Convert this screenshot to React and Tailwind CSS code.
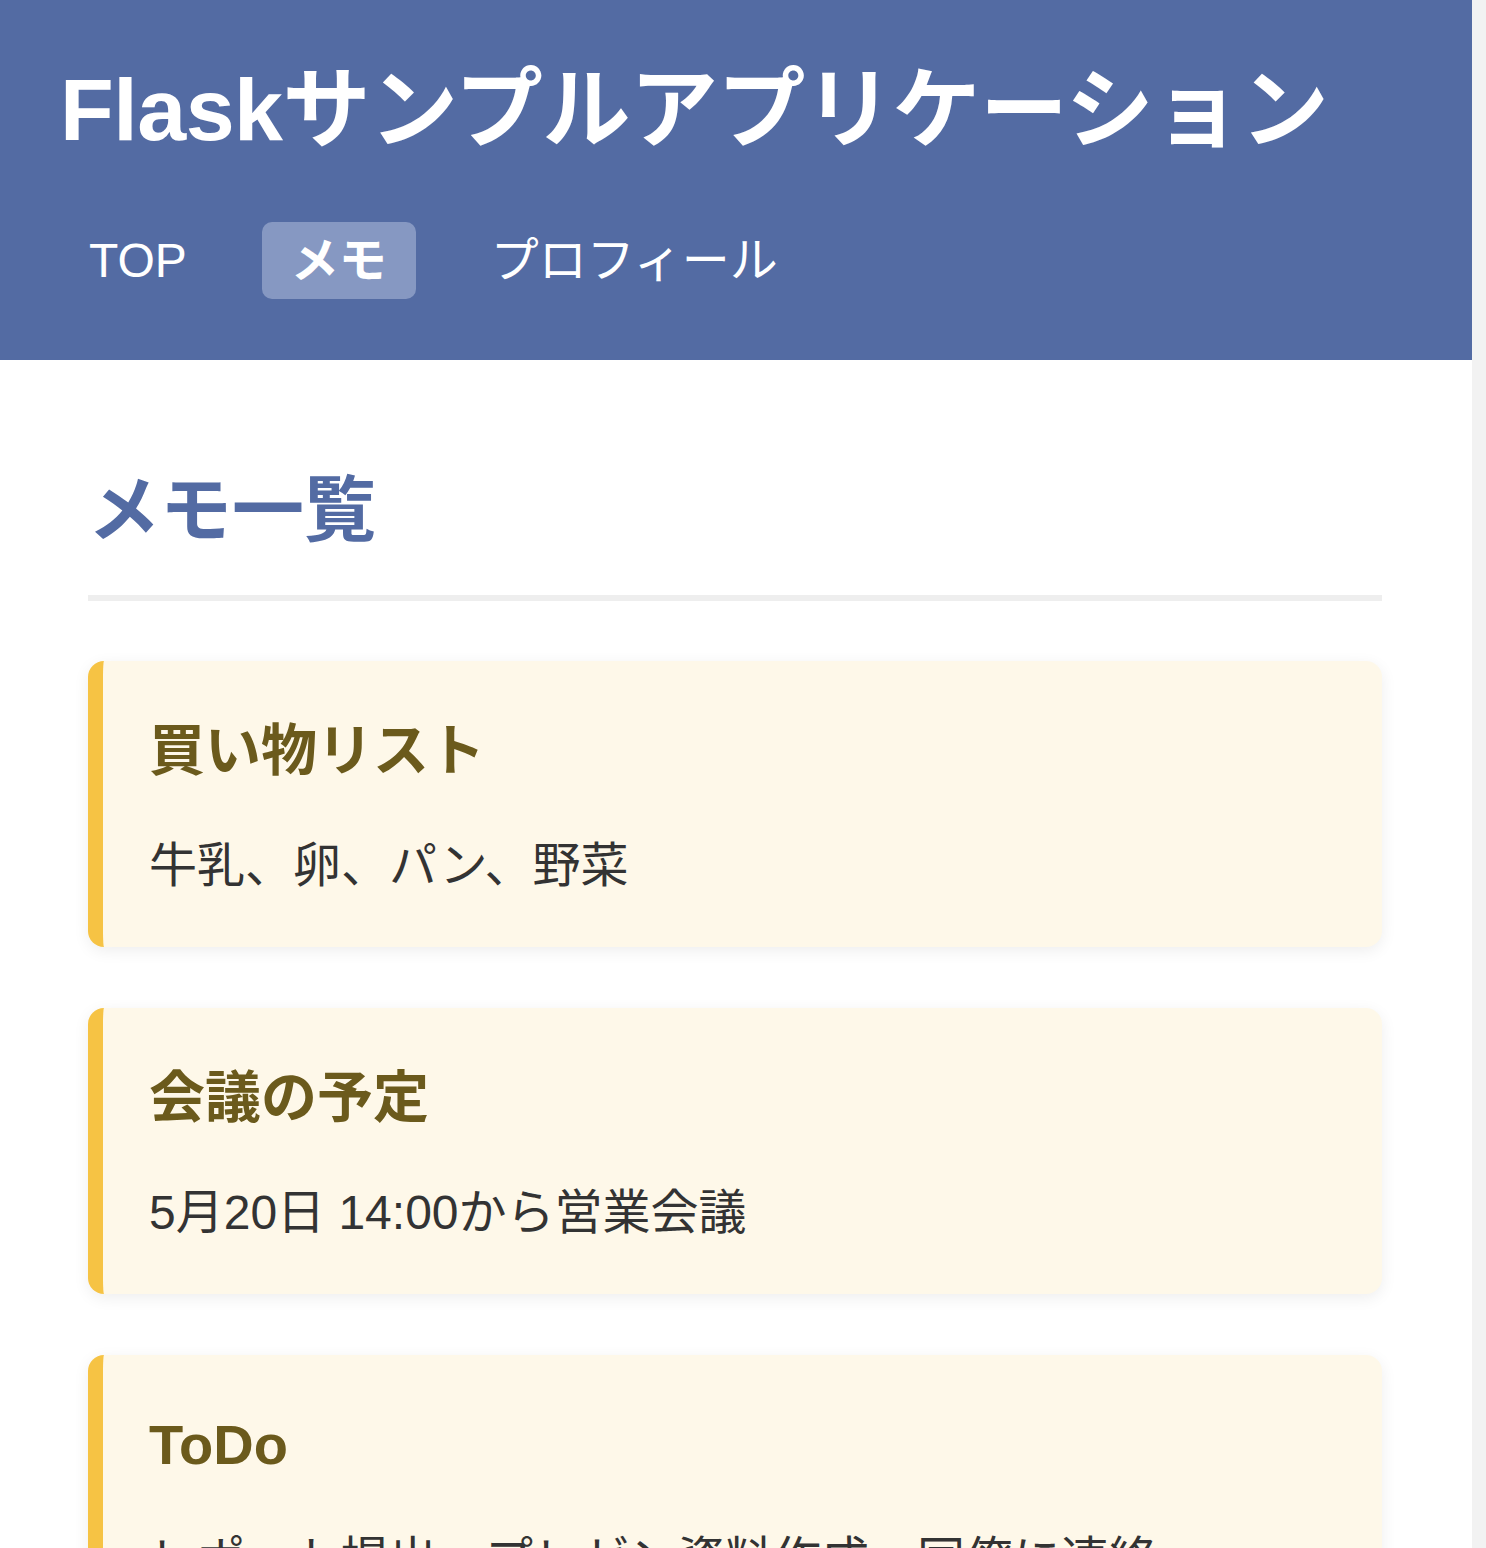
const memos = [
  { title: "買い物リスト", body: "牛乳、卵、パン、野菜" },
  { title: "会議の予定", body: "5月20日 14:00から営業会議" },
  { title: "ToDo", body: "レポート提出、プレゼン資料作成、同僚に連絡" },
];

const navItems = [
  { label: "TOP", active: false },
  { label: "メモ", active: true },
  { label: "プロフィール", active: false },
];

const font = "font-['Liberation_Sans','Noto_Sans_CJK_JP',sans-serif]";

const App = () => {
  return (
    <div className={`flex min-h-screen ${font}`}>
      <div className="flex-1 bg-white">
        <header className="bg-[#536ba3] px-[60px] pt-[57px] pb-[61px]">
          <h1 className="text-[88px] leading-[106px] font-bold text-white tracking-[-0.5px]">
            Flaskサンプルアプリケーション
          </h1>

          <nav className="mt-[59px] flex gap-[46px]">
            {navItems.map((item) => (
              <a
                key={item.label}
                className={`rounded-[10px] px-[29px] py-[14px] text-[48px] leading-[49px] text-white ${
                  item.active ? "bg-[#8698c2] font-bold" : ""
                }`}
              >
                {item.label}
              </a>
            ))}
          </nav>
        </header>

        <main className="pl-[88px] pr-[90px] pt-[108px] pb-[80px]">
          <h2 className="border-b-[6px] border-[#eeeeee] pb-[43px] text-[72px] leading-[84px] font-bold text-[#536ba3]">
            メモ一覧
          </h2>

          <div className="mt-[60px] flex flex-col gap-[61px]">
            {memos.map((memo) => (
              <MemoCard key={memo.title} {...memo} />
            ))}
          </div>
        </main>
      </div>
      <div className="w-[14px] bg-[#f2f2f2]" />
    </div>
  );
};

const MemoCard = ({ title, body }) => {
  return (
    <div className="rounded-[16px] border-l-[15px] border-[#f6c344] bg-[#fef8e9] pl-[46px] pr-[48px] pt-[52px] pb-[42px] shadow-[0_4px_16px_rgba(0,0,0,0.07)]">
      <h3 className="text-[56px] leading-[76px] font-bold text-[#6b5a1c]">
        {title}
      </h3>
      <p className="mt-[38px] text-[48px] leading-[78px] text-[#333333]">
        {body}
      </p>
    </div>
  );
};

export default App;
